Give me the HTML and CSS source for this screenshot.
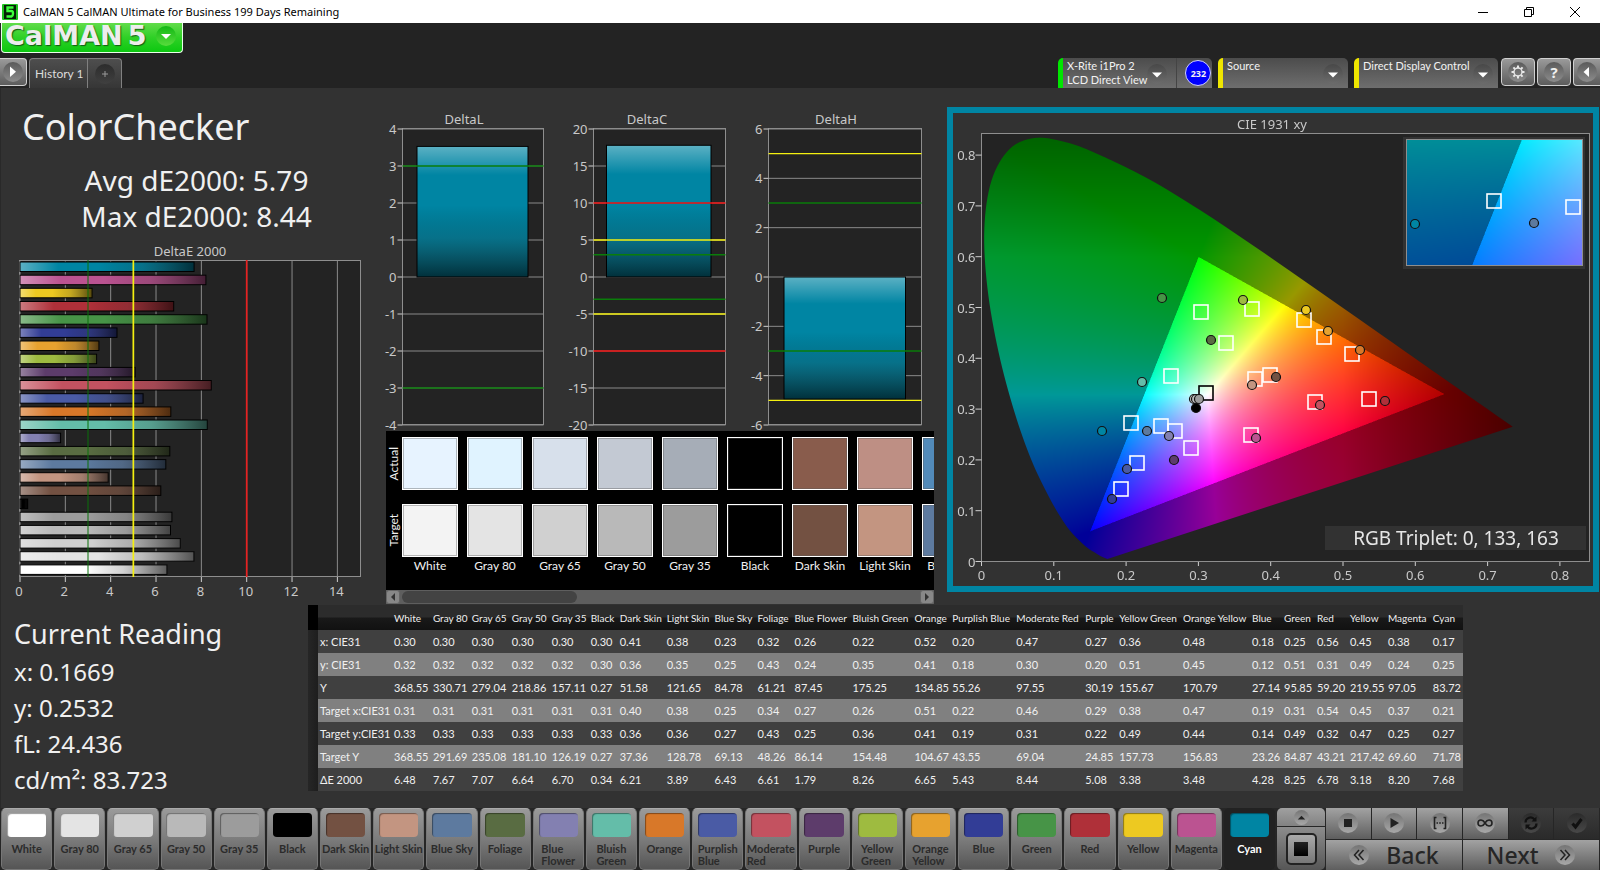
FILE: index.html
```html
<!DOCTYPE html>
<html lang="en">
<head>
<meta charset="utf-8">
<title>CalMAN 5</title>
<link rel="stylesheet" href="styles.css">
</head>
<body>
<header class="titlebar">
  <svg class="app-icon" viewBox="0 0 16 16" aria-hidden="true"><rect width="16" height="16" rx="1" fill="#1fc41f"/><rect x="2" y="1" width="12" height="14" fill="#062006"/><path d="M11.500 3.500H5.500V7H9.500Q11 7 11 9.500T9.500 12.500H4.500" fill="none" stroke="#3dff3d" stroke-width="2.400"/></svg>
  <span class="window-title">CalMAN 5 CalMAN Ultimate for Business 199 Days Remaining</span>
  <div class="window-buttons">
    <button type="button" aria-label="Minimize"><svg viewBox="0 0 12 12"><path d="M1 6.500H11"/></svg></button>
    <button type="button" aria-label="Restore"><svg viewBox="0 0 12 12"><path d="M1.500 3.500H8.500V10.500H1.500ZM3.500 3.500V1.500H10.500V8.500H8.500"/></svg></button>
    <button type="button" aria-label="Close"><svg viewBox="0 0 12 12"><path d="M1 1L11 11M11 1L1 11"/></svg></button>
  </div>
</header>

<div class="brandbar">
  <button type="button" class="brand"><span class="brand-name">CalMAN</span><span class="brand-num">5</span><span class="knob knob-green"><svg viewBox="0 0 20 20"><path d="M5 8H15L10 13Z" fill="#fff"/></svg></span></button>
</div>

<nav class="toolbar">
  <button type="button" class="square square-left" aria-label="Expand"><span class="knob knob-light"><svg viewBox="0 0 20 20"><path d="M7 4.500V15L13 9.750Z" fill="#fff"/></svg></span></button>
  <div class="tabs">
    <button type="button" class="tab">History 1</button>
    <button type="button" class="tab tab-add" aria-label="Add tab"><span class="knob knob-dark"><svg viewBox="0 0 20 20"><path d="M10 7V13M7 10H13" stroke="#999" fill="none"/></svg></span></button>
  </div>
  <div class="devices">
    <div class="device device-meter">
      <button type="button" class="device-main"><span class="device-name">X-Rite i1Pro 2<br>LCD Direct View</span><span class="knob"><svg viewBox="0 0 20 20"><path d="M5 8.500H15L10 13.500Z" fill="#fff"/></svg></span></button>
      <span class="count">232</span>
    </div>
    <div class="device device-source"><button type="button" class="device-main"><span class="device-name">Source</span><span class="knob"><svg viewBox="0 0 20 20"><path d="M5 8.500H15L10 13.500Z" fill="#fff"/></svg></span></button></div>
    <div class="device device-display"><button type="button" class="device-main"><span class="device-name">Direct Display Control</span><span class="knob"><svg viewBox="0 0 20 20"><path d="M5 8.500H15L10 13.500Z" fill="#fff"/></svg></span></button></div>
    <button type="button" class="square" aria-label="Settings"><span class="knob knob-light"><svg viewBox="0 0 20 20" fill="none" stroke="#e8e8e8"><circle cx="10" cy="10" r="4" stroke-width="1.400"/><path d="M10 3.500V6M10 14V16.500M3.500 10H6M14 10H16.500M5.400 5.400L7 7M13 13L14.600 14.600M14.600 5.400L13 7M7 13L5.400 14.600" stroke-width="2"/></svg></span></button>
    <button type="button" class="square help" aria-label="Help"><span class="knob knob-light">?</span></button>
    <button type="button" class="square square-right" aria-label="Collapse"><span class="knob knob-light"><svg viewBox="0 0 20 20"><path d="M12 5V15L6.500 10Z" fill="#fff"/></svg></span></button>
  </div>
</nav>

<main class="workspace">
  <div class="upper">
    <section class="summary">
      <h1>ColorChecker</h1>
      <p class="stat">Avg dE2000: 5.79</p>
      <p class="stat">Max dE2000: 8.44</p>
      <svg id="deltaE" class="chart" viewBox="0 240 384 364" role="img" aria-label="DeltaE 2000"></svg>
    </section>
    <section class="deltas">
      <svg id="deltaLCH" class="chart" viewBox="384 88 556 343" role="img" aria-label="DeltaL, DeltaC and DeltaH"></svg>
      <div class="strip">
        <div class="strip-view">
          <div class="strip-side"><span>Actual</span><span>Target</span></div>
          <div class="strip-row" id="strip"></div>
        </div>
        <div class="scroll">
          <button type="button" aria-label="Scroll left"><svg viewBox="0 0 12 12"><path d="M8 2V10L4 6Z" fill="#333"/></svg></button>
          <div class="scroll-track"><div class="scroll-thumb"></div></div>
          <button type="button" aria-label="Scroll right"><svg viewBox="0 0 12 12"><path d="M4 2V10L8 6Z" fill="#333"/></svg></button>
        </div>
      </div>
    </section>
    <section class="cie">
      <canvas id="gamut" width="1280" height="946"></canvas>
      <svg id="cieAxes" class="chart" viewBox="0 0 640 473" role="img" aria-label="CIE 1931 xy"></svg>
    </section>
  </div>
  <div class="lower">
    <section class="reading">
      <h2>Current Reading</h2>
      <p>x: 0.1669</p>
      <p>y: 0.2532</p>
      <p>fL: 24.436</p>
      <p>cd/m²: 83.723</p>
    </section>
    <table class="data" id="data"></table>
  </div>
</main>

<footer class="patchbar">
  <div class="patches" id="patches"></div>
  <div class="stepper">
    <button type="button" class="step-up" aria-label="More"><span class="knob knob-grey"><svg viewBox="0 0 20 20"><path d="M5 12.500H15L10 7.500Z" fill="#222"/></svg></span></button>
    <button type="button" class="step-pattern" aria-label="Pattern window"><span></span></button>
  </div>
  <div class="transport">
    <div class="transport-row">
      <button type="button" aria-label="Stop"><span class="knob knob-grey"><svg viewBox="0 0 20 20"><rect x="6" y="6" width="8" height="8" fill="#222"/></svg></span></button>
      <button type="button" aria-label="Play"><span class="knob knob-grey"><svg viewBox="0 0 20 20"><path d="M6.500 5V15L15 10Z" fill="#222"/></svg></span></button>
      <button type="button" aria-label="Read series"><span class="knob knob-grey"><svg viewBox="0 0 20 20" fill="none" stroke="#222" stroke-width="1.600"><path d="M6.500 4.500H4.500V15.500H6.500M13.500 4.500H15.500V15.500H13.500"/><path d="M6.500 10H8M9.200 10H10.800M12 10H13.500"/></svg></span></button>
      <button type="button" aria-label="Read continuously"><span class="knob knob-grey"><svg viewBox="0 0 20 20" fill="none" stroke="#222" stroke-width="1.600"><path d="M10 10C8.500 7.500 7.500 7 6 7A3 3 0 0 0 6 13C7.500 13 8.500 12.500 10 10C11.500 7.500 12.500 7 14 7A3 3 0 0 1 14 13C12.500 13 11.500 12.500 10 10Z"/></svg></span></button>
      <button type="button" class="off" aria-label="Repeat"><span class="knob knob-off"><svg viewBox="0 0 20 20" fill="none" stroke="#111" stroke-width="2.200"><path d="M4.500 9.500A5 5 0 0 1 13.500 6.500M15.500 10.500A5 5 0 0 1 6.500 13.500"/><path d="M15.500 3.500V8.500H10.500ZM4.500 16.500V11.500H9.500Z" fill="#111" stroke="none"/></svg></span></button>
      <button type="button" class="off" aria-label="Accept"><span class="knob knob-off"><svg viewBox="0 0 20 20"><path d="M5.500 10.500L8.500 14L14.500 6" fill="none" stroke="#111" stroke-width="3"/></svg></span></button>
    </div>
    <div class="transport-row nav-row">
      <button type="button"><span class="knob knob-grey"><svg viewBox="0 0 20 20" fill="none" stroke="#222" stroke-width="1.500"><path d="M10 5L5.500 10L10 15M14.500 5L10 10L14.500 15"/></svg></span>Back</button>
      <button type="button">Next<span class="knob knob-grey"><svg viewBox="0 0 20 20" fill="none" stroke="#222" stroke-width="1.500"><path d="M5.500 5L10 10L5.500 15M10 5L14.500 10L10 15"/></svg></span></button>
    </div>
  </div>
</footer>
<script src="app.js"></script>
</body>
</html>
```

FILE: styles.css
```css
* { box-sizing: border-box; }
body {
  margin: 0;
  min-height: 100vh;
  display: flex;
  flex-direction: column;
  background: #232323;
  color: #f0f0f0;
  font-family: "Noto Sans", "Open Sans", sans-serif;
  overflow-x: hidden;
}
button {
  margin: 0;
  padding: 0;
  border: 0;
  background: none;
  color: inherit;
  font: inherit;
}
h1, h2, p { margin: 0; font-weight: 400; }

/* window title */
.titlebar {
  display: flex;
  align-items: center;
  height: 23px;
  padding: 0 2px;
  gap: 5px;
  background: #fff;
  color: #000;
  font-size: 11px;
}
.app-icon { width: 16px; height: 16px; }
.window-title { flex: 1; white-space: nowrap; }
.window-buttons { display: flex; }
.window-buttons button { width: 46px; height: 20px; display: grid; place-items: center; }
.window-buttons svg { width: 12px; height: 12px; fill: none; stroke: #000; }

/* brand */
.brandbar { height: 35px; padding-left: 1px; }
.brand {
  display: flex;
  align-items: center;
  width: 182px;
  height: 30px;
  padding: 0 6px 4px 3px;
  border: 1px solid #e9ffe9;
  border-top: 0;
  border-radius: 0 0 4px 4px;
  background: linear-gradient(#62dc4a, #2fd026 50%, #0cc810);
  color: #ededed;
  font: bold 27px/28px "DejaVu Sans", sans-serif;
  text-shadow: 1px 1px 1px #145a14;
}
.brand-num { margin-left: 5px; flex: 1; text-align: left; }

.knob {
  display: grid;
  place-items: center;
  flex: none;
  width: 20px;
  height: 20px;
  border-radius: 50%;
  background: linear-gradient(#484848, #6c6c6c);
}
.knob svg { width: 20px; height: 20px; display: block; }
.knob-green { background: linear-gradient(#12b814, #58dc3c); }
.knob-light { background: linear-gradient(#5a5a5a, #8c8c8c); }
.knob-dark { background: linear-gradient(#2c2c2c, #404040); }
.knob-grey { background: linear-gradient(#757575, #a8a8a8); }
.knob-off { background: linear-gradient(#2a2a2a, #484848); }

/* toolbar */
.toolbar { display: flex; height: 30px; font: 12px Lato, sans-serif; }
.square {
  width: 34px;
  height: 28px;
  display: grid;
  place-items: center;
  border: 1px solid #d0d0d0;
  border-radius: 4px;
  background: linear-gradient(#9a9a9a, #5c5c5c);
}
.square-left { width: 27px; border-left: 0; border-radius: 0 4px 4px 0; }
.square-right { width: 27px; border-right: 0; border-radius: 4px 0 0 4px; }
.help { font: bold 15px "Noto Sans", sans-serif; }
.tabs { display: flex; margin-left: 2px; }
.tab {
  padding: 0 5px;
  width: 59px;
  border: 1px solid #808080;
  border-bottom: 0;
  border-radius: 4px 0 0 0;
  background: linear-gradient(#4e4e4e, #363636);
  color: #dcdcdc;
  white-space: nowrap;
}
.tab-add { width: 34px; border-left: 0; border-radius: 0 4px 0 0; display: grid; place-items: center; }
.devices { display: flex; margin-left: auto; gap: 2px; }
.device {
  display: flex;
  margin-right: 4px;
  border-left: 5px solid #efe600;
  border-radius: 5px 5px 0 0;
  background: linear-gradient(#4c4c4c, #6e6e6e);
  color: #f2f2f2;
  font-size: 11px;
}
.device-main {
  display: flex;
  flex: 1;
  align-items: center;
  justify-content: space-between;
  padding: 1px 5px 0 4px;
  text-align: left;
}
.device-name { align-self: flex-start; line-height: 14px; white-space: nowrap; }
.device-meter { width: 154px; border-left-color: #00e600; }
.device-meter .device-main { padding-right: 9px; border-right: 1px solid #444; }
.device-source { width: 130px; }
.device-display { width: 144px; margin-right: 1px; }
.count {
  display: grid;
  place-items: center;
  flex: none;
  width: 26px;
  height: 26px;
  margin: 2px 2px 0 8px;
  border: 1px solid #cfcfff;
  border-radius: 50%;
  background: #00f;
  font: bold 9px "Noto Sans", sans-serif;
}

/* workspace */
.workspace { flex: 1; background: #323232; border-left: 1px solid #292929; }
.upper { display: grid; grid-template-columns: minmax(0, 384fr) minmax(0, 556fr) minmax(0, 660fr); align-items: start; margin-left: -1px; }
.chart { display: block; width: 100%; height: auto; }
.summary { padding-top: 16px; }
h1 { padding-left: 22px; font-size: 36px; line-height: 46px; }
.stat { padding-left: 9px; text-align: center; font-size: 28px; line-height: 36px; }
h1 + .stat { margin-top: 12px; }
.summary .chart { margin-top: 6px; }

.chart text { fill: #c9c9c9; font: 13px "Noto Sans", "Open Sans", sans-serif; }
.chart .mid { text-anchor: middle; }
.chart .end { text-anchor: end; }
.chart .triplet { fill: #e6e6e6; font-size: 19px; text-anchor: middle; }
.plot { fill: #232323; stroke: #8e8e8e; }
.grid-line { stroke: #8a8a8a; }
.tick { stroke: #cfcfcf; }

.strip { margin: 0 6px 0 2px; font: 12px Lato, sans-serif; }
.strip-view { display: flex; height: 159px; background: #000; overflow: hidden; }
.strip-side { flex: none; width: 16px; padding: 6px 0 34px; display: grid; grid-template-rows: 1fr 1fr; gap: 12px; line-height: 16px; }
.strip-side span { writing-mode: vertical-rl; transform: rotate(180deg); text-align: center; }
.strip-row { display: flex; gap: 9px; padding-top: 6px; }
.patch { flex: none; width: 56px; display: grid; gap: 14px; align-content: start; white-space: nowrap; line-height: 18px; justify-items: center; }
.patch i { width: 56px; height: 53px; border: 1px solid #fff; box-shadow: inset 0 0 0 1px rgba(90, 90, 90, .4); }
.patch span { margin-top: -14px; }
.scroll { display: flex; height: 14px; background: #5e5e5e; }
.scroll button { width: 14px; border: 1px solid #666; border-radius: 3px; background: #888; display: grid; place-items: center; }
.scroll button svg { width: 12px; height: 12px; }
.scroll-track { flex: 1; padding: 1px 2px; }
.scroll-thumb { width: 34%; height: 12px; border-radius: 6px; background: #434343; }

.cie { display: grid; margin: 19px 1px 12px 7px; border: 6px solid #0085a3; }
.cie > * { grid-area: 1 / 1; width: 100%; }
.cie canvas { height: 100%; }
#cieAxes { z-index: 1; }

.lower { display: grid; grid-template-columns: minmax(0, 307fr) minmax(0, 1155fr) minmax(0, 137fr); align-items: start; padding-bottom: 6px; }
.reading { padding: 14px 0 0 13px; }
.reading h2 { font-size: 27px; line-height: 32px; padding-bottom: 4px; }
.reading p { font-size: 24px; line-height: 36px; }
.data { width: 100%; margin-top: 1px; table-layout: fixed; border-collapse: collapse; font: 11px Lato, sans-serif; color: #f0f0f0; }
.data th, .data td { padding: 0; height: 23px; text-align: left; font-weight: 400; white-space: nowrap; }
.data thead th { height: 25px; background: linear-gradient(#2c2c2c 0 48%, #191919 52%, #111); font-size: 10px; }
.data thead th:first-child { background: #000; }
.data tbody tr { background: #404040; }
.data tbody tr:nth-child(even) { background: #808080; }
.data tbody td:first-child { background: linear-gradient(90deg, #262626, #1e1e1e); }
.data tbody th { padding-left: 2px; }

/* footer */
.patchbar { display: flex; height: 62px; padding: 0 1px; background: #262626; }
.patches { flex: 1; display: grid; grid-template-columns: repeat(24, minmax(0, 1fr)); gap: 2px; min-width: 0; }
.patch-button {
  display: flex;
  flex-direction: column;
  align-items: center;
  min-width: 0;
  padding-top: 4px;
  border: 1px solid #777;
  border-radius: 5px;
  border-top-color: #aaa;
  background: linear-gradient(#9a9a9a, #7c7c7c 50%, #555);
  color: #2b2b2b;
  font: bold 11px/12px Lato, sans-serif;
}
.patch-button i { flex: none; width: 80%; height: 24px; margin-bottom: 6px; border-radius: 4px; box-shadow: inset 1px 1px 1px rgba(0, 0, 0, .4); }
.patch-button span { text-align: left; white-space: nowrap; }
.patch-button.active { background: #222; border-color: #222; color: #fff; }
.stepper { width: 48px; margin-left: 2px; display: flex; flex-direction: column; gap: 1px; }
.stepper button { width: 100%; display: grid; place-items: center; background: linear-gradient(#a0a0a0, #828282); }
.step-up { height: 18px; border-radius: 5px 5px 0 0; }
.step-up .knob { width: 15px; height: 15px; }
.step-up svg { width: 15px; height: 15px; }
.stepper .step-pattern { flex: 1; background: linear-gradient(#8c8c8c, #565656); border-radius: 0 0 5px 5px; }
.step-pattern span { width: 31px; height: 32px; border: 2px solid #222; border-radius: 5px; background: linear-gradient(#222, #000) center / 14px 14px no-repeat, linear-gradient(#aaa, #777); }
.transport { width: 273px; margin-left: 1px; display: flex; flex-direction: column; gap: 1px; }
.transport-row { flex: 1; display: grid; grid-template-columns: repeat(6, 1fr); gap: 1px; }
.transport-row button { display: flex; align-items: center; justify-content: center; background: linear-gradient(#a2a2a2, #5e5e5e); }
.transport-row .off { background: linear-gradient(#3c3c3c, #2a2a2a); }
.transport .nav-row { grid-template-columns: 1fr 1fr; }
.transport .nav-row button { gap: 17px; color: #262626; font: 500 23px/28px "Noto Sans", sans-serif; }
```

FILE: app.js
```js
// name, target colour, measured colour, x, y, Y, target x, target y, target Y, dE2000
const patches = [
  ['White', '#f3f3f3', '#e7f3ff', '0.30', '0.32', '368.55', '0.31', '0.33', '368.55', '6.48'],
  ['Gray 80', '#e4e4e4', '#e0f3ff', '0.30', '0.32', '330.71', '0.31', '0.33', '291.69', '7.67'],
  ['Gray 65', '#d0d0d0', '#d7e0eb', '0.30', '0.32', '279.04', '0.31', '0.33', '235.08', '7.07'],
  ['Gray 50', '#b9b9b9', '#c3c9d3', '0.30', '0.32', '218.86', '0.31', '0.33', '181.10', '6.64'],
  ['Gray 35', '#9c9c9c', '#a6adb7', '0.30', '0.32', '157.11', '0.31', '0.33', '126.19', '6.70'],
  ['Black', '#000000', '#000000', '0.30', '0.30', '0.27', '0.31', '0.33', '0.27', '0.34'],
  ['Dark Skin', '#735142', '#895c4c', '0.41', '0.36', '51.58', '0.40', '0.36', '37.36', '6.21'],
  ['Light Skin', '#c39581', '#be8f84', '0.38', '0.35', '121.65', '0.38', '0.36', '128.78', '3.89'],
  ['Blue Sky', '#5d7a9f', '#528ab9', '0.23', '0.25', '84.78', '0.25', '0.27', '69.13', '6.43'],
  ['Foliage', '#596c42', '#596c42', '0.32', '0.43', '61.21', '0.34', '0.43', '48.26', '6.61'],
  ['Blue Flower', '#8380b1', '#8380b1', '0.26', '0.24', '87.45', '0.27', '0.25', '86.14', '1.79'],
  ['Bluish Green', '#64bda9', '#64bda9', '0.22', '0.35', '175.25', '0.26', '0.36', '154.48', '8.26'],
  ['Orange', '#d87829', '#d87829', '0.52', '0.41', '134.85', '0.51', '0.41', '104.67', '6.65'],
  ['Purplish Blue', '#4a5ba5', '#4a5ba5', '0.20', '0.18', '55.26', '0.22', '0.19', '43.55', '5.43'],
  ['Moderate Red', '#c35260', '#c35260', '0.47', '0.30', '97.55', '0.46', '0.31', '69.04', '8.44'],
  ['Purple', '#5d3c6b', '#5d3c6b', '0.27', '0.20', '30.19', '0.29', '0.22', '24.85', '5.08'],
  ['Yellow Green', '#9ebb40', '#9ebb40', '0.36', '0.51', '155.67', '0.38', '0.49', '157.73', '3.38'],
  ['Orange Yellow', '#e7a22f', '#e7a22f', '0.48', '0.45', '170.79', '0.47', '0.44', '156.83', '3.48'],
  ['Blue', '#323d96', '#323d96', '0.18', '0.12', '27.14', '0.19', '0.14', '23.26', '4.28'],
  ['Green', '#479447', '#479447', '0.25', '0.51', '95.85', '0.31', '0.49', '84.87', '8.25'],
  ['Red', '#af3039', '#af3039', '0.56', '0.31', '59.20', '0.54', '0.32', '43.21', '6.78'],
  ['Yellow', '#edc921', '#edc921', '0.45', '0.49', '219.55', '0.45', '0.47', '217.42', '3.18'],
  ['Magenta', '#bb5391', '#bb5391', '0.38', '0.24', '97.05', '0.37', '0.25', '69.60', '8.20'],
  ['Cyan', '#0085a3', '#0085a3', '0.17', '0.25', '83.72', '0.21', '0.27', '71.78', '7.68']
];
const byId = id => document.getElementById(id);
const line = (x1, y1, x2, y2, cls, extra = '') => `<line x1="${x1}" y1="${y1}" x2="${x2}" y2="${y2}" class="${cls}" ${extra}/>`;
const text = (x, y, cls, s) => `<text x="${x}" y="${y}" class="${cls}">${s}</text>`;
const shade = (id, dir) => `<linearGradient id="${id}" x1="0" y1="0" ${dir}>
  <stop offset="0" stop-color="#fff" stop-opacity=".36"/><stop offset=".22" stop-color="#fff" stop-opacity="0"/>
  <stop offset=".45" stop-color="#000" stop-opacity="0"/><stop offset=".7" stop-color="#222" stop-opacity=".2"/><stop offset="1" stop-color="#000" stop-opacity=".64"/></linearGradient>`;

// DeltaE 2000 bar chart
(() => {
  const x = v => 20 + v * 22.67;
  let s = `<defs>${shade('h', 'x2="1" y2="0"')}</defs>` + text(190, 256, 'mid', 'DeltaE 2000');
  s += '<rect class="plot" x="19.5" y="260.5" width="341" height="316"/>';
  for (let v = 0; v <= 14; v += 2) {
    s += line(x(v), 261, x(v), 576, 'grid-line') + line(x(v), 577, x(v), 582, 'tick') + text(x(v) - 1, 596, 'mid', v);
  }
  patches.slice().reverse().forEach((p, i) => {
    const box = `x="20" y="${(262 + i * 13.17).toFixed(1)}" width="${(p[9] * 22.67).toFixed(1)}" height="9.500"`;
    s += `<rect ${box} fill="${p[0] === 'White' ? '#fff' : p[1]}"/><rect ${box} fill="url(#h)" stroke="#000"/>`;
  });
  s += line(x(3), 260, x(3), 577, '', 'stroke="#0a700a"') + line(x(5), 260, x(5), 577, '', 'stroke="#f4f010" stroke-width="1.700"')
    + line(x(10), 260, x(10), 577, '', 'stroke="#e82020" stroke-width="1.700"');
  byId('deltaE').innerHTML = s;
})();

// DeltaL, DeltaC, DeltaH
(() => {
  const green = '#0a7d0a', yellow = '#f4f010', red = '#f01010';
  const charts = [
    { name: 'DeltaL', mid: 464, l: 402.5, r: 543.5, max: 4, step: 1, bar: [417, 528, 3.53], marks: [[3, green], [-3, green]] },
    { name: 'DeltaC', mid: 647, l: 593.5, r: 725.5, max: 20, step: 5, bar: [606.5, 711, 17.8], marks: [[3, green], [-3, green], [5, yellow], [-5, yellow], [10, red], [-10, red]] },
    { name: 'DeltaH', mid: 836, l: 768.5, r: 921.5, max: 6, step: 2, bar: [784, 905.5, -4.95], marks: [[3, green], [-3, green], [5, yellow], [-5, yellow]] }
  ];
  let s = `<defs>${shade('v', 'x2="0" y2="1"')}</defs>`;
  for (const c of charts) {
    const y = v => 277 - v * 148 / c.max;
    s += text(c.mid, 124, 'mid', c.name) + `<rect class="plot" x="${c.l}" y="128.500" width="${c.r - c.l}" height="296"/>`;
    for (let v = -c.max; v <= c.max; v += c.step) {
      s += line(c.l, y(v), c.r, y(v), 'grid-line') + line(c.l - 5, y(v), c.l, y(v), 'tick') + text(c.l - 6, y(v) + 5, 'end', v);
    }
    const [a, b, v] = c.bar;
    const box = `x="${a}" y="${Math.min(y(v), 277)}" width="${b - a}" height="${Math.abs(y(v) - 277)}"`;
    s += `<rect ${box} fill="#0085a3"/><rect ${box} fill="url(#v)" stroke="#000"/>`;
    for (const [m, col] of c.marks) s += line(c.l, y(m), c.r, y(m), '', `stroke="${col}" stroke-width="1.400"`);
  }
  byId('deltaLCH').innerHTML = s;
})();

// swatch strip
byId('strip').innerHTML = patches.slice(0, 9).map(p =>
  `<div class="patch"><i style="background:${p[2]}"></i><i style="background:${p[1]}"></i><span>${p[0]}</span></div>`).join('');

// data table
(() => {
  const widths = [10, 76, 39, 39, 40, 40, 39, 29, 47, 48, 43, 37, 58, 62, 38, 64, 69, 34, 64, 69, 32, 33, 33, 38, 45, 30];
  const rows = ['x: CIE31', 'y: CIE31', 'Y', 'Target x:CIE31', 'Target y:CIE31', 'Target Y', 'ΔE 2000'];
  const total = widths.reduce((a, b) => a + b);
  byId('data').innerHTML = '<colgroup>' + widths.map(w => `<col style="width:${(w / total * 100).toFixed(3)}%">`).join('') + '</colgroup>'
    + '<thead><tr><th></th><th></th>' + patches.map(p => `<th scope="col">${p[0]}</th>`).join('') + '</tr></thead><tbody>'
    + rows.map((r, i) => `<tr><td></td><th scope="row">${r}</th>` + patches.map(p => `<td>${p[i + 3]}</td>`).join('') + '</tr>').join('') + '</tbody>';
})();

// patch buttons
byId('patches').innerHTML = patches.map(p => {
  const label = /^(Blue Flower|Bluish|Purplish|Moderate|Yellow Green|Orange Yellow)/.test(p[0]) ? p[0].replace(' ', '<br>') : p[0];
  return `<button type="button" class="patch-button${p[0] === 'Cyan' ? ' active' : ''}"><i style="background:${p[0] === 'White' ? '#fff' : p[1]}"></i><span>${label}</span></button>`;
}).join('');

// CIE 1931 diagram
(() => {
  const L = 28.5, B = 448.5, SX = 723, SY = 508;
  const locus = [[.1741, .005], [.1644, .0109], [.1566, .0177], [.144, .0297], [.1241, .0578], [.1096, .0868], [.0913, .1327], [.0687, .2007], [.0454, .295], [.0235, .4127], [.0082, .5384], [.0039, .6548], [.0139, .7502], [.0389, .812], [.0743, .8338], [.1142, .8262], [.1547, .8059], [.2296, .7543], [.3016, .6923], [.3731, .6245], [.4441, .5547], [.5125, .4866], [.5752, .4242], [.627, .3725], [.6658, .334], [.6915, .3083], [.719, .2809], [.7347, .2653]];
  const tri = [[.64, .33], [.3, .6], [.15, .06]];
  const side = (p, a, b) => (b[0] - a[0]) * (p[1] - a[1]) - (b[1] - a[1]) * (p[0] - a[0]);
  const colour = (x, y) => {
    const X = x / y, Z = (1 - x - y) / y;
    const rgb = [3.2406 * X - 1.5372 - .4986 * Z, -.9689 * X + 1.8758 + .0415 * Z, .0557 * X - .204 + 1.057 * Z].map(v => Math.max(v, 0));
    const m = Math.max(...rgb);
    const inside = tri.every((a, i) => side([x, y], a, tri[(i + 1) % 3]) >= 0);
    const k = (inside ? 255 : 152) * (1 - Math.max(0, x - .5) * 2.2) * (1 - Math.max(0, y - .6) * 1.5);
    return rgb.map(v => Math.pow(v / m, .85) * k);
  };
  const paint = (w, h, toXY) => {
    const c = document.createElement('canvas');
    c.width = w; c.height = h;
    const g = c.getContext('2d'), img = g.createImageData(w, h);
    for (let j = 0; j < h; j++) for (let i = 0; i < w; i++) {
      const [x, y] = toXY(i / 2, j / 2), o = (j * w + i) * 4, q = colour(x, Math.max(y, .001));
      img.data[o] = q[0]; img.data[o + 1] = q[1]; img.data[o + 2] = q[2]; img.data[o + 3] = 255;
    }
    g.putImageData(img, 0, 0);
    return c;
  };
  const g = byId('gamut').getContext('2d');
  g.scale(2, 2);
  g.fillStyle = '#323232'; g.fillRect(0, 0, 640, 473);
  g.fillStyle = '#232323'; g.fillRect(28, 20, 608, 428);
  g.save();
  g.beginPath();
  // Catmull-Rom spline through the locus points
  const pts = locus.map(([x, y]) => [L + x * SX, B - y * SY]), at = i => pts[Math.min(Math.max(i, 0), pts.length - 1)];
  g.moveTo(...pts[0]);
  for (let i = 0; i < pts.length - 1; i++) {
    const [a, b, c, d] = [at(i - 1), at(i), at(i + 1), at(i + 2)];
    g.bezierCurveTo(b[0] + (c[0] - a[0]) / 6, b[1] + (c[1] - a[1]) / 6, c[0] - (d[0] - b[0]) / 6, c[1] - (d[1] - b[1]) / 6, c[0], c[1]);
  }
  g.closePath(); g.clip();
  g.drawImage(paint(1280, 946, (i, j) => [(i - L) / SX, (B - j) / SY]), 0, 0, 640, 473);
  g.restore();
  g.fillStyle = '#323232'; g.fillRect(450, 24, 182, 132);
  g.drawImage(paint(350, 250, (i, j) => [.207 + (i - 87.5) / 1924, .27 - (j - 61.5) / 1350]), 454, 27, 175, 125);

  let s = text(319, 16, 'mid', 'CIE 1931 xy') + '<rect class="plot" style="fill:none" x="28.5" y="20.5" width="608" height="428"/>';
  for (let i = 0; i <= 8; i++) {
    const x = L + i * SX / 10, y = B - i * SY / 10;
    s += line(x, 449, x, 453, 'tick') + text(x, 467, 'mid', i ? '0.' + i : '0');
    s += line(L - 6, y, L, y, 'tick') + text(L - 6, y + 5, 'end', i ? '0.' + i : '0');
  }
  const box = (x, y, col = '#fff') => `<rect x="${x - 7}" y="${y - 7}" width="14" height="14" fill="none" stroke="${col}" stroke-width="1.600"/>`;
  const dot = (x, y, col) => `<circle cx="${x}" cy="${y}" r="4.500" fill="${col}" stroke="#111" stroke-width="1.200"/>`;
  [[248, 199], [299, 196], [351, 207], [371, 224], [273, 230], [399, 241], [218, 263], [302, 266], [317, 262], [362, 289], [416, 286], [178, 310], [208, 313], [222, 318], [298, 322], [238, 335], [184, 350], [168, 376]]
    .forEach(p => s += box(...p));
  s += box(253, 280, '#000');
  [[209, 185, 19], [290, 187, 16], [353, 197, 21], [375, 218, 17], [258, 227, 9], [407, 237, 12], [189, 269, 11], [299, 272, 7], [323, 264, 6], [241, 286, 2], [243, 286, 3], [246, 286, 4], [243, 295, 5], [367, 292, 14], [432, 288, 20], [149, 318, 23], [194, 318, 8], [216, 323, 10], [303, 325, 22], [221, 347, 15], [174, 356, 13], [159, 386, 18]]
    .forEach(([x, y, i]) => s += dot(x, y, patches[i][1]));
  s += '<rect x="453.5" y="26.5" width="176" height="126" fill="none" stroke="#8e8e8e"/>';
  s += box(541, 88) + box(620, 94) + dot(462, 111, '#0085a3') + dot(581, 110, '#5d7a9f');
  s += '<rect x="372" y="413" width="261" height="24" fill="#323232"/>' + text(503, 432, 'triplet', 'RGB Triplet: 0, 133, 163');
  byId('cieAxes').innerHTML = s;
})();
```
